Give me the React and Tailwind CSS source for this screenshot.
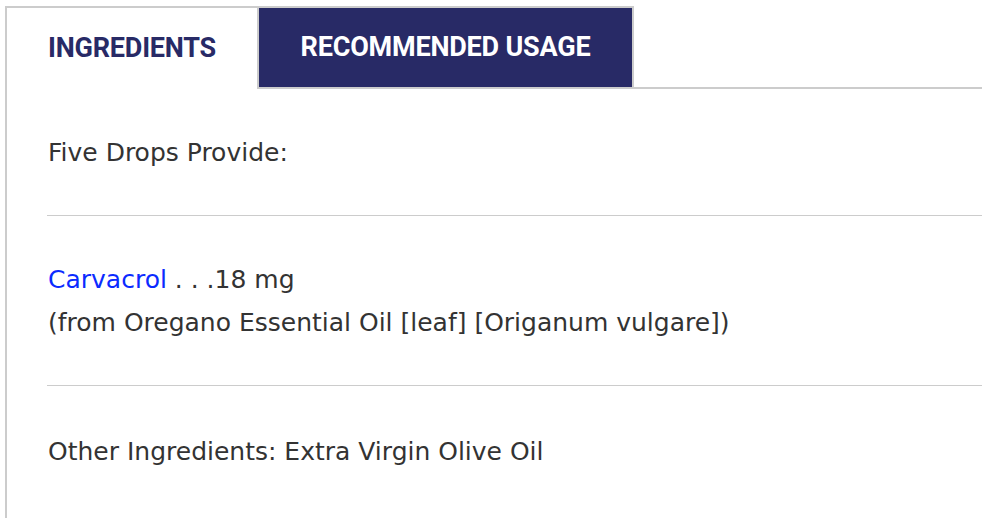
import React, { useState } from "react";

const tabs = ["INGREDIENTS", "RECOMMENDED USAGE"];

const App = () => {
  const [active, setActive] = useState(0);
  return (
    <div className="min-h-[518px] bg-white pt-[6px] pl-[5px] font-['DejaVu_Sans',sans-serif] text-[#333]">
      <div className="min-h-[512px] border-l-2 border-[#ccc]">
        <div className="flex h-[83px]">
          {tabs.map((t, i) => (
            <button
              key={t}
              onClick={() => setActive(i)}
              className={
                i === active
                  ? "flex h-full w-[250px] items-center justify-center border-t-2 border-[#ccc] bg-white font-['Roboto',sans-serif] text-[27px] font-bold tracking-[-0.2px] text-[#282a66]"
                  : "flex h-full w-[377px] items-center justify-center border-2 border-[#ccc] bg-[#282a66] font-['Roboto',sans-serif] text-[27px] font-bold tracking-[-0.2px] text-white"
              }
            >
              {t}
            </button>
          ))}
          <div className="flex-1 border-b-2 border-[#ccc]" />
        </div>

        <div className="pl-[40px]">
          <div className="pt-[42px] pb-[41px] pl-[1px] text-[25px] leading-[43px]">
            Five Drops Provide:
          </div>
          <div className="border-t border-[#ccc] pt-[42px] pb-[41px] pl-[1px] text-[25px] leading-[43px]">
            <a href="#" className="text-[#0b2bff]">Carvacrol</a> . . .18 mg
            <br />
            (from Oregano Essential Oil [leaf] [Origanum vulgare])
          </div>
          <div className="border-t border-[#ccc] pt-[44px] pb-[40px] pl-[1px] text-[25px] leading-[43px]">
            Other Ingredients: Extra Virgin Olive Oil
          </div>
        </div>
      </div>
    </div>
  );
};

export default App;
